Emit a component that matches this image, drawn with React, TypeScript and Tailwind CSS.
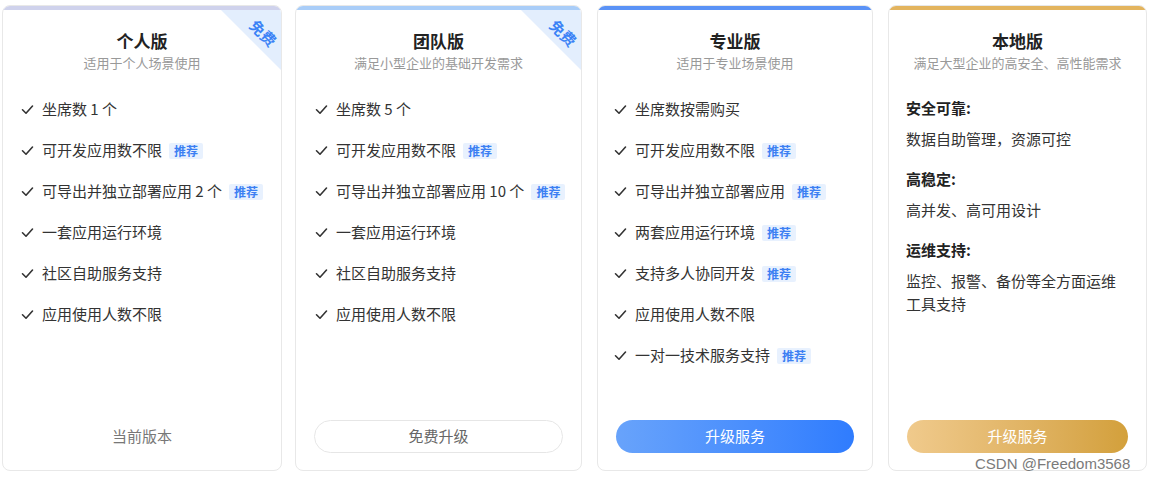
import React from "react";

type Feature = { text: string; hot?: boolean };

type Plan = {
  name: string;
  desc: string;
  bar: string;
  width: string;
  gap: string;
  pad: string;
  free?: boolean;
  features?: Feature[];
  action: "current" | "outline" | "blue" | "gold";
  label: string;
};

const PLANS: Plan[] = [
  {
    name: "个人版",
    desc: "适用于个人场景使用",
    bar: "bg-[#cfd2ec]",
    width: "w-[280px]",
    gap: "",
    pad: "pl-[18px]",
    free: true,
    features: [
      { text: "坐席数 1 个" },
      { text: "可开发应用数不限", hot: true },
      { text: "可导出并独立部署应用 2 个", hot: true },
      { text: "一套应用运行环境" },
      { text: "社区自助服务支持" },
      { text: "应用使用人数不限" },
    ],
    action: "current",
    label: "当前版本",
  },
  {
    name: "团队版",
    desc: "满足小型企业的基础开发需求",
    bar: "bg-[#a9cdf8]",
    width: "w-[287px]",
    gap: "ml-[13px]",
    pad: "pl-[19px]",
    free: true,
    features: [
      { text: "坐席数 5 个" },
      { text: "可开发应用数不限", hot: true },
      { text: "可导出并独立部署应用 10 个", hot: true },
      { text: "一套应用运行环境" },
      { text: "社区自助服务支持" },
      { text: "应用使用人数不限" },
    ],
    action: "outline",
    label: "免费升级",
  },
  {
    name: "专业版",
    desc: "适用于专业场景使用",
    bar: "bg-[#5a92f6]",
    width: "w-[276px]",
    gap: "ml-[15px]",
    pad: "pl-[16px]",
    features: [
      { text: "坐席数按需购买" },
      { text: "可开发应用数不限", hot: true },
      { text: "可导出并独立部署应用", hot: true },
      { text: "两套应用运行环境", hot: true },
      { text: "支持多人协同开发", hot: true },
      { text: "应用使用人数不限" },
      { text: "一对一技术服务支持", hot: true },
    ],
    action: "blue",
    label: "升级服务",
  },
  {
    name: "本地版",
    desc: "满足大型企业的高安全、高性能需求",
    bar: "bg-[#e3b45e]",
    width: "w-[259px]",
    gap: "ml-[15px]",
    pad: "pl-[17px]",
    action: "gold",
    label: "升级服务",
  },
];

const LOCAL_POINTS = [
  { title: "安全可靠:", text: "数据自助管理，资源可控" },
  { title: "高稳定:", text: "高并发、高可用设计" },
  { title: "运维支持:", text: "监控、报警、备份等全方面运维工具支持" },
];

function Check() {
  return (
    <svg width="13" height="13" viewBox="0 0 13 13" className="shrink-0">
      <polyline
        points="1.5,6.8 5,10.2 11.5,3"
        fill="none"
        stroke="#333"
        strokeWidth="1.6"
        strokeLinecap="round"
        strokeLinejoin="round"
      />
    </svg>
  );
}

function Action({ plan }: { plan: Plan }) {
  if (plan.action === "current") {
    return (
      <div className="flex h-[33px] items-center justify-center text-[15px] text-[#777]">
        {plan.label}
      </div>
    );
  }

  const styles = {
    outline: "border border-[#e6e6e6] bg-white text-[#666]",
    blue: "bg-gradient-to-r from-[#68a3fb] to-[#2f7cfe] text-white",
    gold: "bg-gradient-to-r from-[#f0ca8c] to-[#d3a03b] text-white",
  };

  return (
    <div
      className={`mx-[18px] flex h-[33px] cursor-pointer items-center justify-center rounded-full text-[15px] ${styles[plan.action]}`}
    >
      {plan.label}
    </div>
  );
}

function PlanCard({ plan }: { plan: Plan }) {
  return (
    <div
      className={`relative flex h-[466px] flex-col overflow-hidden rounded-lg border border-[#e8e8e8] bg-white ${plan.width} ${plan.gap}`}
    >
      <div className={`h-[4px] shrink-0 ${plan.bar}`} />

      {plan.free && (
        <div className="absolute right-0 top-[4px] h-[60px] w-[60px] bg-[#e3eefd] [clip-path:polygon(0_0,100%_0,100%_100%)]">
          <span className="absolute right-[3px] top-[12px] rotate-45 text-[15px] font-bold text-[#3b82f6]">
            免费
          </span>
        </div>
      )}

      <h2 className="mt-[19px] text-center text-[17px] font-bold leading-[24px] text-[#222]">
        {plan.name}
      </h2>
      <p className="mt-[1px] text-center text-[13px] leading-[18px] text-[#999]">
        {plan.desc}
      </p>

      {plan.features ? (
        <ul className={`mt-[17px] ${plan.pad}`}>
          {plan.features.map((f) => (
            <li key={f.text} className="flex h-[41px] items-center text-[15px] text-[#333]">
              <Check />
              <span className="ml-[8px]">{f.text}</span>
              {f.hot && (
                <span className="ml-[7px] rounded-[2px] bg-[#e8f1fe] px-[5px] text-[12px] font-bold leading-[16px] text-[#3b7ff3]">
                  推荐
                </span>
              )}
            </li>
          ))}
        </ul>
      ) : (
        <div className={`mt-[25px] text-[15px] text-[#333] ${plan.pad}`}>
          {LOCAL_POINTS.map((p) => (
            <div key={p.title} className="mb-[18px]">
              <p className="font-bold leading-[22px] text-[#222]">{p.title}</p>
              <p className="mt-[8px] w-[216px] leading-[23px]">{p.text}</p>
            </div>
          ))}
        </div>
      )}

      <div className="mt-auto pb-[17px]">
        <Action plan={plan} />
      </div>
    </div>
  );
}

export default function App() {
  return (
    <main className="relative h-[479px] w-[1154px] bg-white font-['Noto_Sans_CJK_SC','Noto_Sans',sans-serif]">
      <div className="flex pl-[2px] pt-[5px]">
        {PLANS.map((plan) => (
          <PlanCard key={plan.name} plan={plan} />
        ))}
      </div>

      <span className="absolute left-[975px] top-[453px] font-['Liberation_Sans',sans-serif] text-[15px] text-[#7a7a7a] [text-shadow:0_0_2px_#fff]">
        CSDN @Freedom3568
      </span>
    </main>
  );
}
